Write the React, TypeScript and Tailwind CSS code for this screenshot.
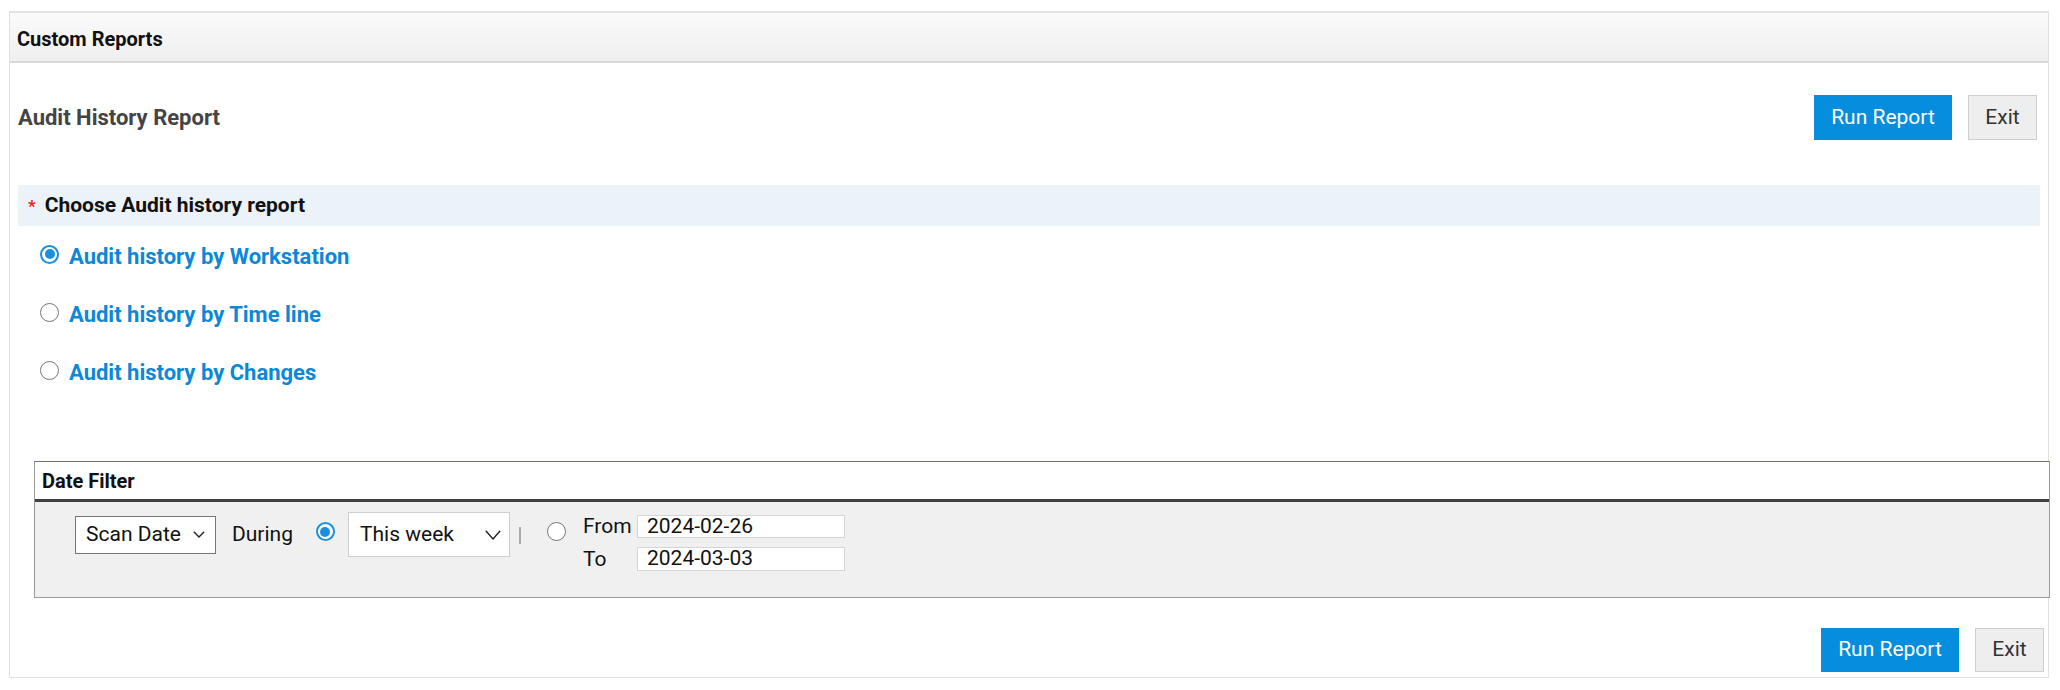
const Radio = ({ checked }: { checked?: boolean }) =>
  checked ? (
    <span className="block w-[19px] h-[19px] rounded-full border-2 border-[#1a8fe0] bg-white flex items-center justify-center shrink-0">
      <span className="block w-[10px] h-[10px] rounded-full bg-[#1a8fe0]" />
    </span>
  ) : (
    <span className="block w-[19px] h-[19px] rounded-full border border-[#767676] bg-white shrink-0" />
  );

const Chevron = ({ w, h }: { w: number; h: number }) => (
  <svg width={w} height={h} viewBox={`0 0 ${w} ${h}`} fill="none" stroke="#222" strokeWidth="1.4">
    <polyline points={`0.8,0.8 ${w / 2},${h - 1} ${w - 0.8},0.8`} />
  </svg>
);

const Buttons = () => (
  <div className="h-full flex items-stretch gap-4">
    <button className="w-[138px] bg-[#068ddd] text-white text-[21px]">Run Report</button>
    <button className="w-[69px] bg-[#eeeeee] border border-[#cfcfcf] text-[#333] text-[21px]">Exit</button>
  </div>
);

const reportTypes = [
  { label: 'Audit history by Workstation', checked: true },
  { label: 'Audit history by Time line' },
  { label: 'Audit history by Changes' },
];

export default function App() {
  return (
    <div className="min-h-[690px] bg-white pt-[11px] pl-[9px] pr-[11px] font-['Roboto',sans-serif]">
      <div className="border border-[#e0e0e0] border-t-2 border-t-[#e3e3e3]">
        {/* panel header */}
        <div className="h-[50px] flex items-center px-[7px] pt-[3px] bg-gradient-to-b from-[#fbfbfb] to-[#efefef] border-b-2 border-[#d8d8d8]">
          <span className="text-[20px] font-bold text-[#111]">Custom Reports</span>
        </div>

        <div className="mt-[32px] h-[45px] flex items-center justify-between pl-[8px] pr-[11px]">
          <h2 className="text-[22px] font-bold text-[#444]">Audit History Report</h2>
          <div className="h-full">
            <Buttons />
          </div>
        </div>

        <div className="mt-[45px] mx-[8px] h-[41px] bg-[#ebf2f8] flex items-center pl-[10px]">
          <span className="text-[#e8231c] text-[17px] font-bold mr-[9px] mt-[3px]">*</span>
          <span className="text-[21px] font-bold text-[#111]">Choose Audit history report</span>
        </div>

        <div className="pl-[30px]">
          {reportTypes.map((r) => (
            <div key={r.label} className="h-[58px] flex items-center gap-[10px] pt-[2px]">
              <span className="-mt-[4px]">
                <Radio checked={r.checked} />
              </span>
              <span className="text-[22px] font-bold text-[#0b88d8]">{r.label}</span>
            </div>
          ))}
        </div>

        {/* date filter */}
        <div className="mt-[61px] ml-[24px] -mr-[2px] border border-[#9a9a9a] border-t-[#6b7f38]">
          <div className="h-[40px] bg-white flex items-center pl-[7px] border-b-[3px] border-[#404040]">
            <span className="text-[20px] font-bold text-[#111]">Date Filter</span>
          </div>
          <div className="h-[95px] bg-[#f0f0f0] pt-[10px] pl-[40px] flex items-start text-[21px] text-[#111]">
            <div className="h-[45px] flex items-center">
              <div className="w-[141px] h-[38px] border border-[#777] bg-white flex items-center justify-between pl-[10px] pr-[10px]">
                <span>Scan Date</span>
                <Chevron w={12} h={7} />
              </div>
            </div>
            <div className="h-[45px] flex items-center ml-[16px]">During</div>
            <div className="h-[45px] flex items-center ml-[23px] -mt-[3px]">
              <Radio checked />
            </div>
            <div className="ml-[13px] w-[162px] h-[45px] border border-[#cfcfcf] bg-white flex items-center justify-between pl-[11px] pr-[8px]">
              <span>This week</span>
              <Chevron w={16} h={10} />
            </div>
            <div className="h-[45px] flex items-center ml-[9px]">
              <span className="block w-[2px] h-[17px] bg-[#aaa] mt-[2px]" />
            </div>
            <div className="h-[45px] flex items-center ml-[26px] -mt-[3px]">
              <Radio />
            </div>
            <div className="ml-[17px] mt-[3px] grid grid-cols-[54px_208px] gap-y-[9px] items-center">
              <span className="leading-[23px]">From</span>
              <div className="h-[23px] border border-[#d4d4d4] bg-white pl-[9px] flex items-center">2024-02-26</div>
              <span className="leading-[23px]">To</span>
              <div className="h-[24px] border border-[#d4d4d4] bg-white pl-[9px] flex items-center">2024-03-03</div>
            </div>
          </div>
        </div>

        <div className="mt-[30px] h-[44px] flex justify-end pr-[4px] mb-[5px]">
          <Buttons />
        </div>
      </div>
    </div>
  );
}
